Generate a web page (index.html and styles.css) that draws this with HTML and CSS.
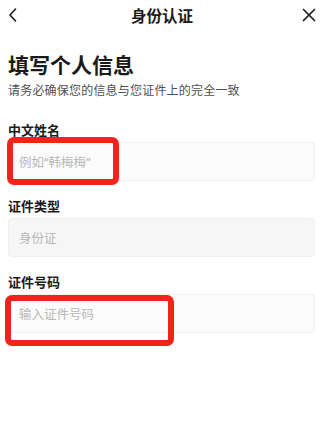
FILE: index.html
```html
<!DOCTYPE html>
<html lang="zh-CN">
<head>
<meta charset="utf-8">
<title>身份认证</title>
<link rel="stylesheet" href="styles.css">
</head>
<body>
<div class="page">
  <header class="nav">
    <span class="nav-btn">
      <svg width="10" height="16" viewBox="0 0 10 16"><path d="M7.5 2 L2 8 L7.5 14" fill="none" stroke="#1a1a1a" stroke-width="1.6" stroke-linecap="round" stroke-linejoin="round"/></svg>
    </span>
    <span class="nav-title">身份认证</span>
    <span class="nav-btn nav-close">
      <svg width="14" height="14" viewBox="0 0 14 14"><path d="M1.5 1.5 L12.5 12.5 M12.5 1.5 L1.5 12.5" fill="none" stroke="#1a1a1a" stroke-width="1.7" stroke-linecap="round"/></svg>
    </span>
  </header>

  <h1 class="heading">填写个人信息</h1>
  <p class="subtitle">请务必确保您的信息与您证件上的完全一致</p>

  <div class="form">
    <div class="field">
      <div class="label">中文姓名</div>
      <div class="input"><span class="ph">例如“韩梅梅”</span></div>
      <div class="mark mark-name"></div>
    </div>
    <div class="field">
      <div class="label">证件类型</div>
      <div class="input input-disabled"><span class="ph">身份证</span></div>
    </div>
    <div class="field">
      <div class="label">证件号码</div>
      <div class="input"><span class="ph">输入证件号码</span></div>
      <div class="mark mark-id"></div>
    </div>
  </div>
</div>
</body>
</html>
```
FILE: styles.css
```css
html, body {
  margin: 0;
  padding: 0;
  background: #ffffff;
}
body {
  font-family: "Noto Sans CJK SC", "Noto Sans", sans-serif;
  color: #1a1a1a;
  width: 321px;
  height: 436px;
  overflow: hidden;
}
.page {
  padding: 0 6px 0 8px;
}
.nav {
  height: 30px;
  display: flex;
  align-items: center;
  justify-content: space-between;
}
.nav-btn {
  width: 16px;
  display: flex;
  align-items: center;
}
.nav-close {
  justify-content: flex-end;
  margin-right: -1px;
}
.nav-title {
  font-size: 15.5px;
  font-weight: 700;
  line-height: 20px;
}
.heading {
  margin: 20px 0 0;
  font-size: 21px;
  line-height: 28px;
  font-weight: 700;
}
.subtitle {
  margin: 3px 0 0;
  font-size: 12px;
  letter-spacing: 0.2px;
  line-height: 18px;
  color: #505050;
}
.form {
  margin-top: 23px;
  display: flex;
  flex-direction: column;
  gap: 17px;
}
.field {
  position: relative;
  display: flex;
  flex-direction: column;
}
.label {
  font-size: 13px;
  line-height: 16px;
  font-weight: 700;
  margin-bottom: 4px;
}
.input {
  height: 39px;
  box-sizing: border-box;
  border: 1px solid #efefef;
  border-radius: 4px;
  background: #fbfbfb;
  display: flex;
  align-items: center;
  padding-left: 10px;
}
.input-disabled {
  background: #f6f6f6;
}
.ph {
  font-family: "Noto Sans", "Noto Sans CJK SC", sans-serif;
  font-size: 12.5px;
  color: #b8b8b8;
}
.mark {
  position: absolute;
  border: 6px solid #f2231a;
  border-radius: 7px;
  box-sizing: border-box;
}
.mark-name {
  left: -1px;
  top: 15px;
  width: 112px;
  height: 48px;
}
.mark-id {
  left: -3px;
  top: 21px;
  width: 169px;
  height: 51px;
}
```
